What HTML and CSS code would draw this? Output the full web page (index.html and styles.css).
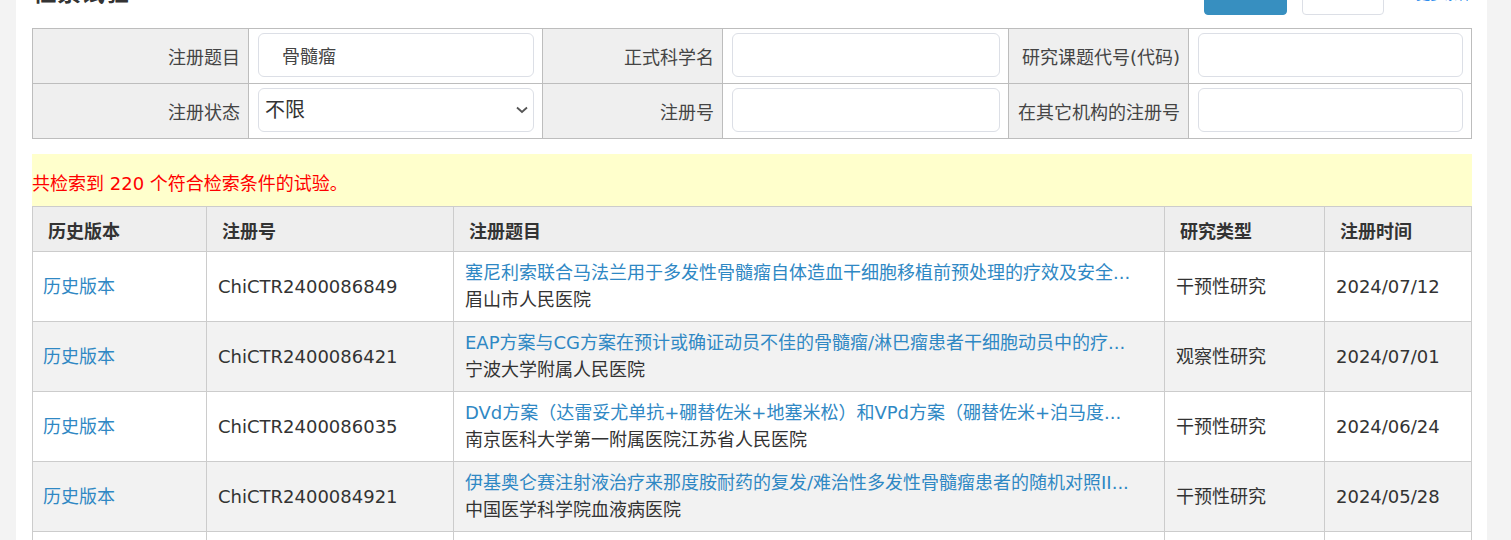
FILE: index.html
```html
<!DOCTYPE html>
<html lang="zh-CN">
<head>
    <meta charset="UTF-8">
    <meta name="viewport" content="width=device-width, initial-scale=1.0">
    <title>检索试验</title>
    <link rel="stylesheet" href="styles.css">
</head>
<body>
    <div class="page">
        <div class="toolbar">
            <h3 class="title">检索试验</h3>
            <div class="actions">
                <button class="btn btn-primary">检索</button>
                <button class="btn btn-default">重置</button>
                <a href="#" class="more">更多条件</a>
            </div>
        </div>

        <table class="search">
            <colgroup>
                <col style="width:216px">
                <col style="width:294px">
                <col style="width:180px">
                <col style="width:286px">
                <col style="width:180px">
                <col>
            </colgroup>
            <tr>
                <td class="label">注册题目</td>
                <td class="field"><input type="text" class="txt indent" value="骨髓瘤"></td>
                <td class="label">正式科学名</td>
                <td class="field"><input type="text" class="txt"></td>
                <td class="label">研究课题代号(代码)</td>
                <td class="field"><input type="text" class="txt"></td>
            </tr>
            <tr>
                <td class="label">注册状态</td>
                <td class="field">
                    <div class="select_wrap">
                        <select class="txt sel">
                            <option>不限</option>
                            <option>预注册</option>
                            <option>补注册</option>
                        </select>
                        <svg class="chevron" width="12" height="8" viewBox="0 0 12 8">
                            <path d="M1 1.5 L6 6 L11 1.5" fill="none" stroke="#555" stroke-width="1.8"/>
                        </svg>
                    </div>
                </td>
                <td class="label">注册号</td>
                <td class="field"><input type="text" class="txt"></td>
                <td class="label">在其它机构的注册号</td>
                <td class="field"><input type="text" class="txt"></td>
            </tr>
        </table>

        <div class="notice">共检索到 220 个符合检索条件的试验。</div>

        <table class="results">
            <colgroup>
                <col style="width:174px">
                <col style="width:247px">
                <col style="width:711px">
                <col style="width:160px">
                <col>
            </colgroup>
            <thead>
                <tr>
                    <th>历史版本</th>
                    <th>注册号</th>
                    <th>注册题目</th>
                    <th>研究类型</th>
                    <th>注册时间</th>
                </tr>
            </thead>
            <tbody>
                <tr>
                    <td><a href="#">历史版本</a></td>
                    <td>ChiCTR2400086849</td>
                    <td>
                        <a href="#" class="topic">塞尼利索联合马法兰用于多发性骨髓瘤自体造血干细胞移植前预处理的疗效及安全...</a>
                        <span class="org">眉山市人民医院</span>
                    </td>
                    <td>干预性研究</td>
                    <td>2024/07/12</td>
                </tr>
                <tr>
                    <td><a href="#">历史版本</a></td>
                    <td>ChiCTR2400086421</td>
                    <td>
                        <a href="#" class="topic">EAP方案与CG方案在预计或确证动员不佳的骨髓瘤/淋巴瘤患者干细胞动员中的疗...</a>
                        <span class="org">宁波大学附属人民医院</span>
                    </td>
                    <td>观察性研究</td>
                    <td>2024/07/01</td>
                </tr>
                <tr>
                    <td><a href="#">历史版本</a></td>
                    <td>ChiCTR2400086035</td>
                    <td>
                        <a href="#" class="topic">DVd方案（达雷妥尤单抗+硼替佐米+地塞米松）和VPd方案（硼替佐米+泊马度...</a>
                        <span class="org">南京医科大学第一附属医院江苏省人民医院</span>
                    </td>
                    <td>干预性研究</td>
                    <td>2024/06/24</td>
                </tr>
                <tr>
                    <td><a href="#">历史版本</a></td>
                    <td>ChiCTR2400084921</td>
                    <td>
                        <a href="#" class="topic">伊基奥仑赛注射液治疗来那度胺耐药的复发/难治性多发性骨髓瘤患者的随机对照II...</a>
                        <span class="org">中国医学科学院血液病医院</span>
                    </td>
                    <td>干预性研究</td>
                    <td>2024/05/28</td>
                </tr>
                <tr>
                    <td><a href="#">历史版本</a></td>
                    <td>ChiCTR2400084307</td>
                    <td>
                        <a href="#" class="topic">多发性骨髓瘤患者自体造血干细胞移植后维持治疗的临床研究...</a>
                        <span class="org">北京大学人民医院</span>
                    </td>
                    <td>观察性研究</td>
                    <td>2024/05/15</td>
                </tr>
            </tbody>
        </table>
    </div>
</body>
</html>
```

FILE: styles.css
```css
* {
    margin: 0;
    padding: 0;
    box-sizing: border-box;
}

html, body {
    overflow: hidden;
}

body {
    background-color: #f3f3f3;
    font-family: "DejaVu Sans", "Noto Sans CJK SC", sans-serif;
    color: #333;
}

.page {
    margin: 0 24px 0 16px;
    padding: 0 15px 40px 16px;
    background-color: #fff;
}

/* top bar, scrolled mostly out of view */
.toolbar {
    display: flex;
    justify-content: space-between;
    align-items: flex-start;
    height: 78px;
    margin-top: -50px;
}

.title {
    margin-top: 29px;
    font-size: 24px;
    line-height: 28px;
    font-weight: 700;
    color: #333;
    padding-left: 1px;
}

.actions {
    display: flex;
    align-items: flex-start;
}

.btn {
    height: 65px;
    padding-bottom: 20px;
    border-radius: 4px;
    font-size: 16px;
    font-family: inherit;
}

.btn-primary {
    width: 83px;
    background-color: #378fc0;
    border: 1px solid #378fc0;
    color: #fff;
}

.btn-default {
    width: 82px;
    margin-left: 15px;
    background-color: #fff;
    border: 1px solid #dcdfe6;
    color: #333;
}

.more {
    margin-left: 32px;
    margin-top: 34px;
    font-size: 14px;
    line-height: 20px;
    color: #2e8ded;
    text-decoration: none;
}

/* search form */
.search {
    width: 100%;
    border-collapse: collapse;
    table-layout: fixed;
}

.search td {
    height: 55px;
    border: 1px solid #bdbdbd;
}

.search .label {
    background-color: #efefef;
    text-align: right;
    padding-right: 8px;
    font-size: 18px;
    color: #444;
    white-space: nowrap;
}

.search .field {
    padding: 3px 8px 5px 9px;
}

.txt {
    display: block;
    width: 100%;
    height: 44px;
    border: 1px solid #dcdfe6;
    border-radius: 6px;
    padding-left: 6px;
    font-size: 18px;
    font-family: inherit;
    color: #444;
    background-color: #fff;
    outline: none;
}

.txt.indent {
    padding-left: 23px;
}

.select_wrap {
    position: relative;
}

.sel {
    -webkit-appearance: none;
    appearance: none;
    font-size: 20px;
    padding-left: 6px;
    color: #333;
}

.chevron {
    position: absolute;
    right: 6px;
    top: 18px;
    pointer-events: none;
}

/* result count */
.notice {
    margin-top: 15px;
    padding: 16px 0 9px;
    line-height: 27px;
    background-color: #ffffcc;
    color: #ff0000;
    font-size: 18px;
}

/* results list */
.results {
    width: 100%;
    border-collapse: collapse;
    table-layout: fixed;
}

.results th,
.results td {
    border: 1px solid #ccc;
    text-align: left;
    font-size: 18px;
}

.results th {
    height: 45px;
    padding: 2px 15px 0;
    background-color: #eeeeee;
    font-weight: 700;
    color: #333;
}

.results td {
    height: 70px;
    padding: 7px 11px 8px;
    line-height: 27px;
    color: #333;
    white-space: nowrap;
    overflow: hidden;
}

.results td:first-child {
    padding-left: 10px;
}

.results tbody tr:nth-child(even) td {
    background-color: #f2f2f2;
}

.results a {
    color: #2f88c4;
    text-decoration: none;
}

.topic,
.org {
    display: block;
}
```
